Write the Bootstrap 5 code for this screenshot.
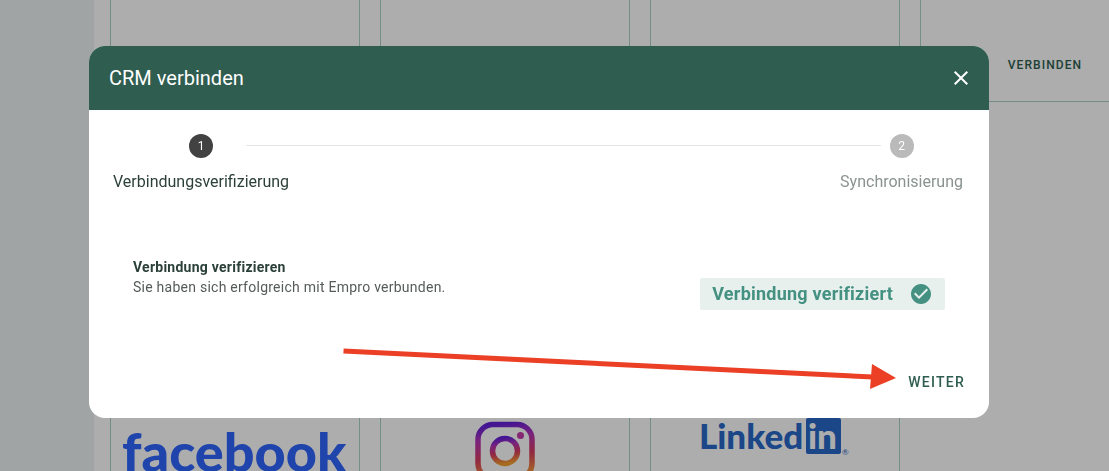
<!DOCTYPE html>
<html lang="de">
<head>
<meta charset="utf-8">
<meta name="viewport" content="width=device-width, initial-scale=1">
<title>CRM verbinden</title>
<link href="https://cdn.jsdelivr.net/npm/bootstrap@5.3.0/dist/css/bootstrap.min.css" rel="stylesheet">
<style>
  body { font-family: Roboto, "Liberation Sans", sans-serif; color: #2b4038; }
  .page-shell { height: 100vh; }
  .side-panel { width: 94px; background: #ecf2f2; }
  .tiles { width: 1060px; gap: 20px; margin-top: -198px; }
  .tile { width: 250px; border: 1px solid #a8d2c8; }
  .tile-connect { height: 300px; padding-bottom: 28px; }
  .tile-logo { height: 460px; padding-top: 200px; }
  .tile-btn { font-size: 12px; line-height: 16px; font-weight: 500; letter-spacing: .09em; color: #2e5e50; }
  .modal-backdrop { --bs-backdrop-opacity: .32; }
  .crm-modal { padding: 46px 31px 46px 0; }
  .crm-modal .modal-dialog { max-width: 900px; margin: 0 auto; }
  .crm-modal .modal-content { border-radius: 16px; color: #2b4038; }
  .crm-head { background: #2f5d50; height: 64px; padding: 0 16px 0 20px; border-radius: 16px 16px 0 0; }
  .crm-head h1 { font-size: 20px; line-height: 32px; font-weight: 400; }
  .step-dot { width: 24px; height: 24px; background: #424242; font-size: 12px; }
  .step-name { font-size: 16px; line-height: 24px; }
  .step-off .step-dot { background: #bababa; }
  .step-off .step-name { color: #8a9390; }
  .step-line { height: 1px; background: #e3e6e5; margin: 11px -41px 0 -43px; }
  .crm-steps { padding: 24px 26px 0 24px; }
  .crm-body { padding: 63px 44px 0; }
  .crm-body h2 { font-size: 14px; line-height: 20px; font-weight: 700; letter-spacing: .018em; }
  .crm-body p { font-size: 14px; line-height: 20px; letter-spacing: .018em; color: #555b59; }
  .ok-chip { margin-top: 21px; padding: 4px 12px; gap: 16px; font-size: 18px; line-height: 24px; font-weight: 700; letter-spacing: .0125em; color: #449182; background: #e8f0ee; border-radius: 2px; }
  .crm-foot { padding: 60px 24px 24px; }
  .next-btn { font-size: 14px; line-height: 24px; font-weight: 500; letter-spacing: .09em; color: #2f5d50; }
  .pointer { left: 250px; top: 296px; }
</style>
</head>
<body class="overflow-hidden">
<div class="page-shell d-flex overflow-hidden">
  <aside class="side-panel flex-shrink-0"></aside>
  <main class="flex-grow-1 overflow-hidden ps-3">
    <div class="tiles d-flex flex-wrap">
      <div class="tile"></div>
      <div class="tile"></div>
      <div class="tile"></div>
      <div class="tile tile-connect d-flex align-items-end justify-content-center">
        <button type="button" class="btn tile-btn border-0 p-0">VERBINDEN</button>
      </div>
      <div class="tile tile-logo">
        <svg width="248" height="200" role="img" aria-label="facebook"><text x="11" y="149" font-family="Lato" font-weight="900" font-size="54" fill="#2e65fd">facebook</text></svg>
      </div>
      <div class="tile tile-logo">
        <svg width="248" height="200" role="img" aria-label="Instagram">
          <defs>
            <linearGradient id="insta" x1=".35" y1="0" x2=".5" y2="1">
              <stop offset="0" stop-color="#6420d8"/><stop offset=".25" stop-color="#b335b8"/><stop offset=".6" stop-color="#d83c60"/><stop offset="1" stop-color="#f5a030"/>
            </linearGradient>
          </defs>
          <g fill="none" stroke="url(#insta)" stroke-width="5.500">
            <rect x="97" y="101.500" width="54" height="54" rx="15"/>
            <circle cx="124" cy="128" r="12.500"/>
          </g>
          <circle cx="139.500" cy="112.500" r="3.500" fill="#c43aa8"/>
        </svg>
      </div>
      <div class="tile tile-logo">
        <svg width="248" height="200" role="img" aria-label="LinkedIn">
          <text x="48" y="126" font-family="Lato" font-weight="900" font-size="35" fill="#2868c8">Linked</text>
          <rect x="155" y="95" width="35" height="36" rx="2" fill="#2868c8"/>
          <text x="157" y="126" font-family="Lato" font-weight="900" font-size="35" fill="#fff">in</text>
          <text x="191" y="132" font-family="Lato" font-size="8" fill="#2868c8">®</text>
        </svg>
      </div>
    </div>
  </main>
</div>

<div class="modal-backdrop show"></div>
<div class="modal crm-modal d-block" role="dialog" aria-modal="true" aria-labelledby="crmTitle">
  <div class="modal-dialog">
    <div class="modal-content border-0">
      <header class="crm-head d-flex align-items-center justify-content-between text-white">
        <h1 id="crmTitle" class="m-0">CRM verbinden</h1>
        <button type="button" class="btn p-0 border-0 text-white d-flex" aria-label="Schließen">
          <svg width="24" height="24" viewBox="0 0 24 24" fill="currentColor"><path d="M19 6.41 17.59 5 12 10.59 6.41 5 5 6.41 10.59 12 5 17.59 6.41 19 12 13.41 17.59 19 19 17.59 13.41 12z"/></svg>
        </button>
      </header>
      <div class="crm-steps d-flex align-items-start">
        <div class="d-flex flex-column align-items-center gap-2">
          <span class="step-dot rounded-circle text-white d-flex align-items-center justify-content-center">1</span>
          <span class="step-name pt-1">Verbindungsverifizierung</span>
        </div>
        <div class="step-line flex-grow-1"></div>
        <div class="step-off d-flex flex-column align-items-center gap-2">
          <span class="step-dot rounded-circle text-white d-flex align-items-center justify-content-center">2</span>
          <span class="step-name pt-1">Synchronisierung</span>
        </div>
      </div>
      <div class="crm-body d-flex align-items-start justify-content-between">
        <div>
          <h2 class="m-0">Verbindung verifizieren</h2>
          <p class="m-0">Sie haben sich erfolgreich mit Empro verbunden.</p>
        </div>
        <div class="ok-chip d-flex align-items-center">
          <span>Verbindung verifiziert</span>
          <svg width="24" height="24" viewBox="0 0 24 24" fill="currentColor"><path d="M12 2C6.5 2 2 6.5 2 12s4.5 10 10 10 10-4.5 10-10S17.5 2 12 2m-2 15-5-5 1.41-1.41L10 14.17l7.59-7.59L19 8z"/></svg>
        </div>
      </div>
      <footer class="crm-foot d-flex justify-content-end">
        <button type="button" class="btn next-btn p-0 border-0">WEITER</button>
      </footer>
      <svg class="pointer position-absolute pe-none" width="560" height="50" viewBox="0 0 560 50" aria-hidden="true">
        <path d="M4.500 9 534 35" stroke="#eb4025" stroke-width="5"/>
        <path d="M533 22 557 36 531 47z" fill="#eb4025"/>
      </svg>
    </div>
  </div>
</div>
<script src="https://cdn.jsdelivr.net/npm/bootstrap@5.3.0/dist/js/bootstrap.bundle.min.js"></script>
</body>
</html>
